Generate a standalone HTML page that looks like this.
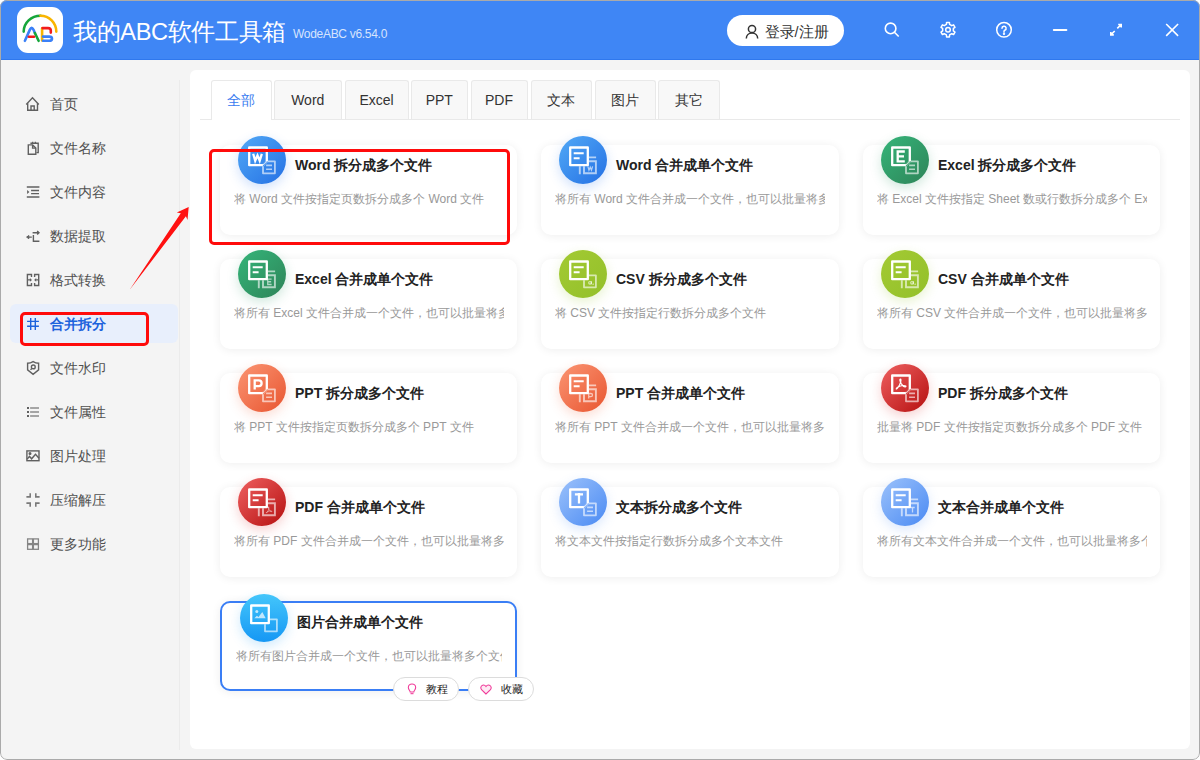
<!DOCTYPE html>
<html><head><meta charset="utf-8">
<style>
*{margin:0;padding:0;box-sizing:border-box}
html,body{width:1200px;height:760px;overflow:hidden;background:#fff}
body{font-family:"Liberation Sans",sans-serif;position:relative}
#win{position:absolute;left:0;top:0;width:1200px;height:760px;background:#f4f4f4;border-radius:7px;overflow:hidden}
#frame{position:absolute;left:0;top:0;width:1200px;height:760px;border:1px solid #aaaaaa;border-radius:7px;pointer-events:none}
#title{position:absolute;left:0;top:0;width:1200px;height:60px;background:#3f86f5;border-bottom:1px solid #2f78ee}
#logo{position:absolute;left:17px;top:7px;width:46px;height:46px;background:#fff;border-radius:11px}
#apptitle{position:absolute;left:73px;top:17px;color:#fff;font-size:23.6px;line-height:30px;letter-spacing:-0.35px;white-space:nowrap}
#ver{position:absolute;left:293px;top:25.5px;color:#d6e4fd;font-size:12px;letter-spacing:-0.3px;line-height:16px;white-space:nowrap}
#login{position:absolute;left:727px;top:15px;width:117px;height:31px;background:#fff;border-radius:16px}
#login span{position:absolute;left:37.5px;top:8.5px;font-size:14.5px;line-height:17px;color:#333}
.tb{position:absolute;top:20px;width:20px;height:20px}
#side{position:absolute;left:0;top:60px;width:180px;height:700px;background:#f4f4f4}
#sideline{position:absolute;left:179px;top:80px;width:1px;height:670px;background:#ebebeb}
.si{position:absolute;left:0;width:179px;height:20px}
.si .ic{position:absolute;left:25px;top:2px;width:16px;height:16px}
.si .tx{position:absolute;left:50px;top:0;font-size:14px;line-height:20px;color:#505050;white-space:nowrap}
.si.on .tx{color:#1d63dc;font-weight:bold}
#active{position:absolute;left:10px;top:244px;width:168px;height:39px;background:#e8effc;border-radius:6px}
#panel{position:absolute;left:190px;top:70px;width:1000px;height:679px;background:#fff;border-radius:6px}
.tab{position:absolute;top:10px;height:39px;background:#f8f8f8;border:1px solid #e9e9e9;border-bottom:none;border-radius:3px 3px 0 0;font-size:14px;line-height:38px;text-align:center;color:#333}
.tab.on{background:#fff;color:#3a7cf0;height:40px;z-index:2}
#tabline{position:absolute;left:10px;top:49px;width:980px;height:1px;background:#e9e9e9}
.card{position:absolute;width:297px;height:90px;background:#fff;border-radius:10px;box-shadow:0 1px 10px rgba(0,0,0,0.07)}
.card .ico{position:absolute;left:18px;top:-9px;width:48px;height:48px;border-radius:50%}
.card .t{position:absolute;left:75px;top:10px;font-size:14px;font-weight:bold;line-height:20px;color:#222;white-space:nowrap}
.card .d{position:absolute;left:14px;top:45px;width:270px;font-size:12px;line-height:18px;color:#999;white-space:nowrap;overflow:hidden}
.card.hov{border:2px solid #3a7ef5}
.card.hov .ico{left:18px;top:-9px}
.card.hov .t{left:75px;top:9px}
.card.hov .d{left:14px;top:44px;width:266px}
.pill{position:absolute;top:607px;width:66px;height:24px;background:#fff;border:1px solid #dcdcdc;border-radius:12px;font-size:11px;line-height:23px;color:#222}
.pill span{position:absolute;left:32px;top:0}
.pill svg{position:absolute;left:13px;top:5px}
.red{position:absolute;border:3px solid #ff0b0b;border-radius:5px}
</style></head><body>
<div id="win">
 <div id="title">
  <div id="logo"><svg width="46" height="46" viewBox="0 0 46 46" fill="none" stroke-width="2.6" stroke-linecap="round" stroke-linejoin="round">
   <path d="M6.7 24.6 A16.8 15.9 0 0 1 23.5 8.7" stroke="#16a63b"/>
   <path d="M23.5 8.7 A15.8 15.9 0 0 1 39.3 24.6" stroke="#f9b500"/>
   <path d="M7.9 33.8 L12.9 22.6 Q14.6 19 16.4 22.6 L17.9 26" stroke="#3b80f7"/>
   <path d="M17.9 26 L21.6 33.8" stroke="#16a63b"/>
   <path d="M11.9 29.8 H17" stroke="#f21b1b"/>
   <path d="M25.1 21.4 V33.4" stroke="#f9b500"/>
   <path d="M25.6 21.1 H31 Q33.8 21.1 33.8 23.6 V25.6" stroke="#f21b1b"/>
   <path d="M26 29.6 H32.2 Q35 29.6 35 31.7 Q35 33.8 32.2 33.8 H26" stroke="#3b80f7"/>
  </svg></div>
  <div id="apptitle">我的ABC软件工具箱</div>
  <div id="ver">WodeABC v6.54.0</div>
  <div id="login"><svg style="position:absolute;left:18px;top:9px" width="14" height="15" viewBox="0 0 14 15" fill="none" stroke="#333" stroke-width="1.5"><circle cx="7" cy="5" r="3.6"/><path d="M1.3 14.5c0-3.4 2.6-5.6 5.7-5.6s5.7 2.2 5.7 5.6"/></svg><span>登录/注册</span></div>
  <svg class="tb" style="left:881px" viewBox="0 0 20 20" fill="none" stroke="#fff" stroke-width="1.6"><circle cx="9.6" cy="8.4" r="5.3"/><path d="M13.4 12.2l4.3 4.3"/></svg>
  <svg class="tb" style="left:938px" viewBox="0 0 20 20" fill="none" stroke="#fff" stroke-width="1.5" stroke-linejoin="round"><path d="M8.39 4.44 L8.59 2.44 L11.41 2.44 L11.61 4.44 L13.75 5.68 L15.58 4.85 L17.00 7.29 L15.36 8.46 L15.36 10.94 L17.00 12.11 L15.58 14.55 L13.75 13.72 L11.61 14.96 L11.41 16.96 L8.59 16.96 L8.39 14.96 L6.25 13.72 L4.42 14.55 L3.00 12.11 L4.64 10.94 L4.64 8.46 L3.00 7.29 L4.42 4.85 L6.25 5.68Z"/><circle cx="10" cy="9.7" r="2.3"/></svg>
  <svg class="tb" style="left:994px" viewBox="0 0 20 20" fill="none" stroke="#fff" stroke-width="1.5"><circle cx="10" cy="9.8" r="7.3"/><path d="M8 8.3a2.05 2.05 0 1 1 2.8 1.9c-.5.3-.8.7-.8 1.2v.7" stroke-linecap="round"/><circle cx="10" cy="13.7" r=".45" fill="#fff"/></svg>
  <svg class="tb" style="left:1050px" viewBox="0 0 20 20" fill="none" stroke="#fff" stroke-width="2" stroke-linecap="round"><path d="M3.8 10h12.6"/></svg>
  <svg class="tb" style="left:1106px" viewBox="0 0 20 20" fill="none" stroke="#fff" stroke-width="1.6"><path d="M11.3 8.4l3.9-3.9M12.2 4.5h3v3M8.7 11l-3.9 3.9M4.8 11.9v3h3"/></svg>
  <svg class="tb" style="left:1162px" viewBox="0 0 20 20" fill="none" stroke="#fff" stroke-width="1.6"><path d="M4.2 4l11.9 11.9M16.1 4L4.2 15.9"/></svg>
 </div>
 <div id="side">
<div id="active"></div><div class="si" style="top:34px"><svg class="ic" viewBox="0 0 16 16" fill="none" stroke="#606060" stroke-width="1.4"><path d="M1.2 8.4L7.5 1.8l6.3 6.6"/><path d="M2.7 7.2v7.1h9.8V7.2"/><path d="M6 14.3V10h3.2v4.3"/></svg><div class="tx">首页</div></div>
<div class="si" style="top:78px"><svg class="ic" viewBox="0 0 16 16" fill="none" stroke="#606060" stroke-width="1.4"><path d="M5.4 3.2H13.2V12.6H11.4"/><path d="M7.6 1.8v1.4M10.4 1.8v1.4"/><path d="M3.3 4.9H7.6L10.8 8.1V14.3H3.3Z"/><path d="M7.6 4.9V8.1H10.8"/></svg><div class="tx">文件名称</div></div>
<div class="si" style="top:122px"><svg class="ic" viewBox="0 0 16 16" fill="none" stroke="#606060" stroke-width="1.4"><path d="M1.8 3H14.4M6.1 6.5H14M6.1 9.6H14M1.8 13H14.4"/><path d="M2.1 6.1L4.4 8L2.1 9.9Z" fill="#606060" stroke="none"/></svg><div class="tx">文件内容</div></div>
<div class="si" style="top:166px"><svg class="ic" viewBox="0 0 16 16" fill="none" stroke="#606060" stroke-width="1.4"><path d="M7.6 4.7h6.4M12.2 2.9l1.8 1.8-1.8 1.8M3 9.1h3.8M8.4 7v6.3h6"/><path d="M1.6 9.1l2.2-1.6v3.2z" fill="#606060" stroke-width="1"/></svg><div class="tx">数据提取</div></div>
<div class="si" style="top:210px"><svg class="ic" viewBox="0 0 16 16" fill="none" stroke="#606060" stroke-width="1.4"><path d="M6.5 5V2.5H2.4V13.5H6.5V11M9.6 5V2.5H13.7V13.5H9.6V11M3 7.9H5M13.1 7.9H11.1"/><path d="M4.9 6.1L7 7.9L4.9 9.7ZM11.2 6.1L9.1 7.9L11.2 9.7Z" fill="#606060" stroke="none"/></svg><div class="tx">格式转换</div></div>
<div class="si on" style="top:254px"><svg class="ic" viewBox="0 0 16 16" fill="none" stroke="#1d63dc" stroke-width="1.4"><path d="M5.7 2.1v11.8M10.3 2.1v11.8M2.1 5.4h11.8M2.1 10.3h11.8"/></svg><div class="tx">合并拆分</div></div>
<div class="si" style="top:298px"><svg class="ic" viewBox="0 0 16 16" fill="none" stroke="#606060" stroke-width="1.4"><path d="M2.6 3.3Q5.5 3.3 8.1 1.6Q10.7 3.3 13.6 3.3V9.8L8.1 14.3L2.6 9.8Z"/><circle cx="8.3" cy="6.9" r="1.9"/><path d="M6.9 8.4L5.5 9.7"/></svg><div class="tx">文件水印</div></div>
<div class="si" style="top:342px"><svg class="ic" viewBox="0 0 16 16" fill="none" stroke="#606060" stroke-width="1.4"><path d="M2 4H4M2 8H4M2 12H4" stroke-width="1.8"/><path d="M5.1 4H14M5.1 8H14M5.1 12H14" stroke="#8a8a8a" stroke-width="1.7"/></svg><div class="tx">文件属性</div></div>
<div class="si" style="top:386px"><svg class="ic" viewBox="0 0 16 16" fill="none" stroke="#606060" stroke-width="1.4"><rect x="1.9" y="2.9" width="12.1" height="9.8"/><path d="M2.2 11.1L4.5 8.3L6.6 10.8L10.5 6.3L14 10.3"/><circle cx="5" cy="5.6" r=".8" fill="#606060"/></svg><div class="tx">图片处理</div></div>
<div class="si" style="top:430px"><svg class="ic" viewBox="0 0 16 16" fill="none" stroke="#606060" stroke-width="1.4"><path d="M1.4 4.9H5.2V1.2M10.8 1.2V4.9H14.6M1.4 11.1H5.2V14.8M10.8 14.8V11.1H14.6" stroke="#7a7a7a" stroke-width="1.6"/></svg><div class="tx">压缩解压</div></div>
<div class="si" style="top:474px"><svg class="ic" viewBox="0 0 16 16" fill="none" stroke="#606060" stroke-width="1.4"><g stroke="#858585" stroke-width="1.3"><rect x="2.6" y="2.9" width="5" height="4.7"/><rect x="8.4" y="2.9" width="5" height="4.7"/><rect x="2.6" y="8.6" width="5" height="4.7"/><rect x="8.4" y="8.6" width="5" height="4.7"/></g></svg><div class="tx">更多功能</div></div>

 </div>
 <div id="sideline"></div>
 <div id="panel">
  <div class="tab on" style="left:20.5px;width:61px">全部</div>
  <div class="tab" style="left:84px;width:67.5px">Word</div>
  <div class="tab" style="left:154.5px;width:64px">Excel</div>
  <div class="tab" style="left:221px;width:56.5px">PPT</div>
  <div class="tab" style="left:280.5px;width:57px">PDF</div>
  <div class="tab" style="left:340.5px;width:61.5px">文本</div>
  <div class="tab" style="left:404.5px;width:61px">图片</div>
  <div class="tab" style="left:468.3px;width:61.5px">其它</div>
  <div id="tabline"></div>
<div class="card" style="left:30px;top:75px">
 <div class="ico" style="background:linear-gradient(135deg,#52a9f6,#2470e4);box-shadow:0 4px 12px rgba(40,120,240,0.22)"><svg width="48" height="48" viewBox="0 0 48 48" style="position:absolute;left:0;top:0"><path d="M29.9 25.3H36.9V37.3H25V30.3" fill="none" stroke="#fff" stroke-opacity="0.62" stroke-width="1.8" stroke-linejoin="round"/><path d="M28.1 29.4h5.9M28.1 33.3h5.9" stroke="#fff" stroke-opacity="0.62" stroke-width="1.6"/><path d="M24.9 29.2H11.2V11.5H28.8V25.3" fill="none" stroke="#fff" stroke-width="2.3" stroke-linejoin="round"/><path d="M25.3 28.9L29 25.2" stroke="#fff" stroke-opacity="0.85" stroke-width="2.2" stroke-dasharray="0.9 0.6"/><path d="M15.2 17.8L17.2 24.8L19.5 19.4L21.7 24.8L23.8 17.8" fill="none" stroke="#fff" stroke-opacity="1" stroke-width="2.3" stroke-linejoin="miter"/></svg></div>
 <div class="t">Word 拆分成多个文件</div><div class="d">将 Word 文件按指定页数拆分成多个 Word 文件</div>
</div>
<div class="card" style="left:351px;top:75px;width:298px">
 <div class="ico" style="background:linear-gradient(135deg,#52a9f6,#2470e4);box-shadow:0 4px 12px rgba(40,120,240,0.22)"><svg width="48" height="48" viewBox="0 0 48 48" style="position:absolute;left:0;top:0"><path d="M20.8 30.2V38.2M30 21.4H37.1" fill="none" stroke="#fff" stroke-opacity="0.62" stroke-width="1.9"/><path d="M29.9 25.3H36.9V37.3H25V30.3" fill="none" stroke="#fff" stroke-opacity="0.62" stroke-width="1.9"/><path d="M15.2 17.8L17.2 24.8L19.5 19.4L21.7 24.8L23.8 17.8" transform="translate(31.3 31.7) scale(0.55) translate(-19.6 -20.3)" fill="none" stroke="#fff" stroke-opacity="0.62" stroke-width="2.3" stroke-linejoin="miter"/><path d="M11.2 11.5H28.8V29.2H11.2Z" fill="none" stroke="#fff" stroke-width="2.3" stroke-linejoin="round"/><path d="M14.7 17.3h10M14.7 22.3h5.9" stroke="#fff" stroke-width="2.1"/></svg></div>
 <div class="t">Word 合并成单个文件</div><div class="d">将所有 Word 文件合并成一个文件，也可以批量将多个文件夹中的文件合并</div>
</div>
<div class="card" style="left:673px;top:75px">
 <div class="ico" style="background:linear-gradient(135deg,#35b57a,#2e8458);box-shadow:0 4px 12px rgba(40,150,100,0.22)"><svg width="48" height="48" viewBox="0 0 48 48" style="position:absolute;left:0;top:0"><path d="M29.9 25.3H36.9V37.3H25V30.3" fill="none" stroke="#fff" stroke-opacity="0.62" stroke-width="1.8" stroke-linejoin="round"/><path d="M28.1 29.4h5.9M28.1 33.3h5.9" stroke="#fff" stroke-opacity="0.62" stroke-width="1.6"/><path d="M24.9 29.2H11.2V11.5H28.8V25.3" fill="none" stroke="#fff" stroke-width="2.3" stroke-linejoin="round"/><path d="M25.3 28.9L29 25.2" stroke="#fff" stroke-opacity="0.85" stroke-width="2.2" stroke-dasharray="0.9 0.6"/><path d="M23.8 15.5H16.7V25.4H23.8M16.7 20.4H23" fill="none" stroke="#fff" stroke-opacity="1" stroke-width="2.3" stroke-linejoin="miter"/></svg></div>
 <div class="t">Excel 拆分成多个文件</div><div class="d">将 Excel 文件按指定 Sheet 数或行数拆分成多个 Excel 文件</div>
</div>
<div class="card" style="left:30px;top:189px">
 <div class="ico" style="background:linear-gradient(135deg,#35b57a,#2e8458);box-shadow:0 4px 12px rgba(40,150,100,0.22)"><svg width="48" height="48" viewBox="0 0 48 48" style="position:absolute;left:0;top:0"><path d="M20.8 30.2V38.2M30 21.4H37.1" fill="none" stroke="#fff" stroke-opacity="0.62" stroke-width="1.9"/><path d="M29.9 25.3H36.9V37.3H25V30.3" fill="none" stroke="#fff" stroke-opacity="0.62" stroke-width="1.9"/><path d="M23.8 15.5H16.7V25.4H23.8M16.7 20.4H23" transform="translate(31.3 31.7) scale(0.55) translate(-19.6 -20.3)" fill="none" stroke="#fff" stroke-opacity="0.62" stroke-width="2.3" stroke-linejoin="miter"/><path d="M11.2 11.5H28.8V29.2H11.2Z" fill="none" stroke="#fff" stroke-width="2.3" stroke-linejoin="round"/><path d="M14.7 17.3h10M14.7 22.3h5.9" stroke="#fff" stroke-width="2.1"/></svg></div>
 <div class="t">Excel 合并成单个文件</div><div class="d">将所有 Excel 文件合并成一个文件，也可以批量将多个文件夹中的文件合并</div>
</div>
<div class="card" style="left:351px;top:189px;width:298px">
 <div class="ico" style="background:linear-gradient(135deg,#a3ca33,#93c02a);box-shadow:0 4px 12px rgba(150,200,40,0.22)"><svg width="48" height="48" viewBox="0 0 48 48" style="position:absolute;left:0;top:0"><path d="M29.9 25.3H36.9V37.3H25V30.3" fill="none" stroke="#fff" stroke-opacity="0.62" stroke-width="1.8" stroke-linejoin="round"/><g fill="none" stroke="#fff" stroke-opacity="0.62" stroke-width="1.2"><circle cx="31" cy="32.8" r="1.3"/><path d="M32.4 31.2V34.3"/><path d="M34.3 33.5L34 35" stroke-width="1.1"/></g><path d="M11.2 11.5H28.8V29.2H11.2Z" fill="none" stroke="#fff" stroke-width="2.3" stroke-linejoin="round"/><path d="M14.7 17.3h10M14.7 22.3h5.9" stroke="#fff" stroke-width="2.1"/></svg></div>
 <div class="t">CSV 拆分成多个文件</div><div class="d">将 CSV 文件按指定行数拆分成多个文件</div>
</div>
<div class="card" style="left:673px;top:189px">
 <div class="ico" style="background:linear-gradient(135deg,#a3ca33,#93c02a);box-shadow:0 4px 12px rgba(150,200,40,0.22)"><svg width="48" height="48" viewBox="0 0 48 48" style="position:absolute;left:0;top:0"><path d="M20.8 30.2V38.2M30 21.4H37.1" fill="none" stroke="#fff" stroke-opacity="0.62" stroke-width="1.9"/><path d="M29.9 25.3H36.9V37.3H25V30.3" fill="none" stroke="#fff" stroke-opacity="0.62" stroke-width="1.9"/><g fill="none" stroke="#fff" stroke-opacity="0.62" stroke-width="1.2"><circle cx="31" cy="32.8" r="1.3"/><path d="M32.4 31.2V34.3"/><path d="M34.3 33.5L34 35" stroke-width="1.1"/></g><path d="M11.2 11.5H28.8V29.2H11.2Z" fill="none" stroke="#fff" stroke-width="2.3" stroke-linejoin="round"/><path d="M14.7 17.3h10M14.7 22.3h5.9" stroke="#fff" stroke-width="2.1"/></svg></div>
 <div class="t">CSV 合并成单个文件</div><div class="d">将所有 CSV 文件合并成一个文件，也可以批量将多个文件夹中的文件合并</div>
</div>
<div class="card" style="left:30px;top:303px">
 <div class="ico" style="background:linear-gradient(135deg,#fb9573,#e85530);box-shadow:0 4px 12px rgba(240,100,60,0.22)"><svg width="48" height="48" viewBox="0 0 48 48" style="position:absolute;left:0;top:0"><path d="M29.9 25.3H36.9V37.3H25V30.3" fill="none" stroke="#fff" stroke-opacity="0.62" stroke-width="1.8" stroke-linejoin="round"/><path d="M28.1 29.4h5.9M28.1 33.3h5.9" stroke="#fff" stroke-opacity="0.62" stroke-width="1.6"/><path d="M24.9 29.2H11.2V11.5H28.8V25.3" fill="none" stroke="#fff" stroke-width="2.3" stroke-linejoin="round"/><path d="M25.3 28.9L29 25.2" stroke="#fff" stroke-opacity="0.85" stroke-width="2.2" stroke-dasharray="0.9 0.6"/><path d="M16.7 25.6V16.3H20.8Q23.6 16.3 23.6 19.2Q23.6 22.1 20.8 22.1H16.7" fill="none" stroke="#fff" stroke-opacity="1" stroke-width="2.3" stroke-linejoin="miter"/></svg></div>
 <div class="t">PPT 拆分成多个文件</div><div class="d">将 PPT 文件按指定页数拆分成多个 PPT 文件</div>
</div>
<div class="card" style="left:351px;top:303px;width:298px">
 <div class="ico" style="background:linear-gradient(135deg,#fb9573,#e85530);box-shadow:0 4px 12px rgba(240,100,60,0.22)"><svg width="48" height="48" viewBox="0 0 48 48" style="position:absolute;left:0;top:0"><path d="M20.8 30.2V38.2M30 21.4H37.1" fill="none" stroke="#fff" stroke-opacity="0.62" stroke-width="1.9"/><path d="M29.9 25.3H36.9V37.3H25V30.3" fill="none" stroke="#fff" stroke-opacity="0.62" stroke-width="1.9"/><path d="M16.7 25.6V16.3H20.8Q23.6 16.3 23.6 19.2Q23.6 22.1 20.8 22.1H16.7" transform="translate(31.3 31.7) scale(0.55) translate(-19.6 -20.3)" fill="none" stroke="#fff" stroke-opacity="0.62" stroke-width="2.3" stroke-linejoin="miter"/><path d="M11.2 11.5H28.8V29.2H11.2Z" fill="none" stroke="#fff" stroke-width="2.3" stroke-linejoin="round"/><path d="M14.7 17.3h10M14.7 22.3h5.9" stroke="#fff" stroke-width="2.1"/></svg></div>
 <div class="t">PPT 合并成单个文件</div><div class="d">将所有 PPT 文件合并成一个文件，也可以批量将多个文件夹中的文件合并</div>
</div>
<div class="card" style="left:673px;top:303px">
 <div class="ico" style="background:linear-gradient(135deg,#ef6060,#b51010);box-shadow:0 4px 12px rgba(220,40,40,0.22)"><svg width="48" height="48" viewBox="0 0 48 48" style="position:absolute;left:0;top:0"><path d="M29.9 25.3H36.9V37.3H25V30.3" fill="none" stroke="#fff" stroke-opacity="0.62" stroke-width="1.8" stroke-linejoin="round"/><path d="M28.1 29.4h5.9M28.1 33.3h5.9" stroke="#fff" stroke-opacity="0.62" stroke-width="1.6"/><path d="M24.9 29.2H11.2V11.5H28.8V25.3" fill="none" stroke="#fff" stroke-width="2.3" stroke-linejoin="round"/><path d="M25.3 28.9L29 25.2" stroke="#fff" stroke-opacity="0.85" stroke-width="2.2" stroke-dasharray="0.9 0.6"/><g transform="translate(14.5,14.5) scale(1.1)" fill="none" stroke="#fff" stroke-opacity="1" stroke-width="1.1" stroke-linecap="round" stroke-linejoin="round"><path d="M4.5 0.5 C3.6 0.6 3.9 2.4 5.2 4.6 C6.3 6.3 8.2 7.9 9.3 7.4 C10.2 6.8 8.3 6.2 5.5 6.6 C3.3 7 0.6 8.6 0.7 9.3 C0.9 10 2.4 8.4 3.6 6 C4.8 3.4 5.4 0.6 4.5 0.5Z"/></g></svg></div>
 <div class="t">PDF 拆分成多个文件</div><div class="d">批量将 PDF 文件按指定页数拆分成多个 PDF 文件</div>
</div>
<div class="card" style="left:30px;top:417px">
 <div class="ico" style="background:linear-gradient(135deg,#ef6060,#b51010);box-shadow:0 4px 12px rgba(220,40,40,0.22)"><svg width="48" height="48" viewBox="0 0 48 48" style="position:absolute;left:0;top:0"><path d="M20.8 30.2V38.2M30 21.4H37.1" fill="none" stroke="#fff" stroke-opacity="0.62" stroke-width="1.9"/><path d="M29.9 25.3H36.9V37.3H25V30.3" fill="none" stroke="#fff" stroke-opacity="0.62" stroke-width="1.9"/><g transform="translate(27.8,28.8) scale(0.65)" fill="none" stroke="#fff" stroke-opacity="0.6" stroke-width="1.1" stroke-linecap="round" stroke-linejoin="round"><path d="M4.5 0.5 C3.6 0.6 3.9 2.4 5.2 4.6 C6.3 6.3 8.2 7.9 9.3 7.4 C10.2 6.8 8.3 6.2 5.5 6.6 C3.3 7 0.6 8.6 0.7 9.3 C0.9 10 2.4 8.4 3.6 6 C4.8 3.4 5.4 0.6 4.5 0.5Z"/></g><path d="M11.2 11.5H28.8V29.2H11.2Z" fill="none" stroke="#fff" stroke-width="2.3" stroke-linejoin="round"/><path d="M14.7 17.3h10M14.7 22.3h5.9" stroke="#fff" stroke-width="2.1"/></svg></div>
 <div class="t">PDF 合并成单个文件</div><div class="d">将所有 PDF 文件合并成一个文件，也可以批量将多个文件夹中的文件合并</div>
</div>
<div class="card" style="left:351px;top:417px;width:298px">
 <div class="ico" style="background:linear-gradient(135deg,#9cc2fb,#4a8af3);box-shadow:0 4px 12px rgba(90,150,245,0.22)"><svg width="48" height="48" viewBox="0 0 48 48" style="position:absolute;left:0;top:0"><path d="M29.9 25.3H36.9V37.3H25V30.3" fill="none" stroke="#fff" stroke-opacity="0.62" stroke-width="1.8" stroke-linejoin="round"/><path d="M28.1 29.4h5.9M28.1 33.3h5.9" stroke="#fff" stroke-opacity="0.62" stroke-width="1.6"/><path d="M24.9 29.2H11.2V11.5H28.8V25.3" fill="none" stroke="#fff" stroke-width="2.3" stroke-linejoin="round"/><path d="M25.3 28.9L29 25.2" stroke="#fff" stroke-opacity="0.85" stroke-width="2.2" stroke-dasharray="0.9 0.6"/><path d="M15.9 16.3H24M20 15.1V25.4" fill="none" stroke="#fff" stroke-opacity="1" stroke-width="2.3" stroke-linejoin="miter"/></svg></div>
 <div class="t">文本拆分成多个文件</div><div class="d">将文本文件按指定行数拆分成多个文本文件</div>
</div>
<div class="card" style="left:673px;top:417px">
 <div class="ico" style="background:linear-gradient(135deg,#9cc2fb,#4a8af3);box-shadow:0 4px 12px rgba(90,150,245,0.22)"><svg width="48" height="48" viewBox="0 0 48 48" style="position:absolute;left:0;top:0"><path d="M20.8 30.2V38.2M30 21.4H37.1" fill="none" stroke="#fff" stroke-opacity="0.62" stroke-width="1.9"/><path d="M29.9 25.3H36.9V37.3H25V30.3" fill="none" stroke="#fff" stroke-opacity="0.62" stroke-width="1.9"/><path d="M15.9 16.3H24M20 15.1V25.4" transform="translate(31.3 31.7) scale(0.55) translate(-19.6 -20.3)" fill="none" stroke="#fff" stroke-opacity="0.62" stroke-width="2.3" stroke-linejoin="miter"/><path d="M11.2 11.5H28.8V29.2H11.2Z" fill="none" stroke="#fff" stroke-width="2.3" stroke-linejoin="round"/><path d="M14.7 17.3h10M14.7 22.3h5.9" stroke="#fff" stroke-width="2.1"/></svg></div>
 <div class="t">文本合并成单个文件</div><div class="d">将所有文本文件合并成一个文件，也可以批量将多个文件夹中的文件合并</div>
</div>
<div class="card hov" style="left:30px;top:531px">
 <div class="ico" style="background:linear-gradient(180deg,#44c6fb,#1597f4);box-shadow:0 4px 12px rgba(30,160,245,0.22)"><svg width="48" height="48" viewBox="0 0 48 48" style="position:absolute;left:0;top:0"><path d="M29.9 25.3H36.9V37.3H25V30.3" fill="none" stroke="#fff" stroke-opacity="0.62" stroke-width="1.8" stroke-linejoin="round"/><path d="M11.2 11.5H28.8V29.2H11.2Z" fill="none" stroke="#fff" stroke-width="2.3" stroke-linejoin="round"/><circle cx="16.8" cy="17.6" r="1.5" fill="#fff" fill-opacity="0.7"/><path d="M14.3 24.2l2.6-2.4 1.6 1.3 3.8-5 3.4 6.1z" fill="#fff" fill-opacity="0.7"/></svg></div>
 <div class="t">图片合并成单个文件</div><div class="d">将所有图片合并成一个文件，也可以批量将多个文件夹中的文件合并</div>
</div>

  <div class="pill" style="left:203px"><svg width="10" height="12" viewBox="0 0 12 14" fill="none" stroke="#f03c9a" stroke-width="1.3"><path d="M3.8 10.5C3.6 8.8 1.6 7.8 1.6 5.3a4.4 4.4 0 0 1 8.8 0c0 2.5-2 3.5-2.2 5.2z"/><path d="M4.2 12.6h3.6"/></svg><span>教程</span></div>
  <div class="pill" style="left:278px"><svg width="12" height="11" viewBox="0 0 14 13" style="left:11px;top:6px" fill="none" stroke="#f03c9a" stroke-width="1.3"><path d="M7 11.8L2 7C.2 5.2.6 2.2 3 1.4 4.6.9 6 1.6 7 3c1-1.4 2.4-2.1 4-1.6 2.4.8 2.8 3.8 1 5.6z" fill="#feeaf4"/></svg><span>收藏</span></div>
 </div>
 <div class="red" style="left:209px;top:149px;width:301px;height:96px"></div>
 <div class="red" style="left:20px;top:312px;width:129px;height:34px"></div>
 <svg style="position:absolute;left:0;top:0" width="1200" height="760"><path d="M129.5 290 L180.8 213.2 L176.8 212.4 L188.7 207.1 L187.5 220.1 L185.9 216.2 Z" fill="#ff1010"/></svg>
 <div id="frame"></div>
</div>
</body></html>
